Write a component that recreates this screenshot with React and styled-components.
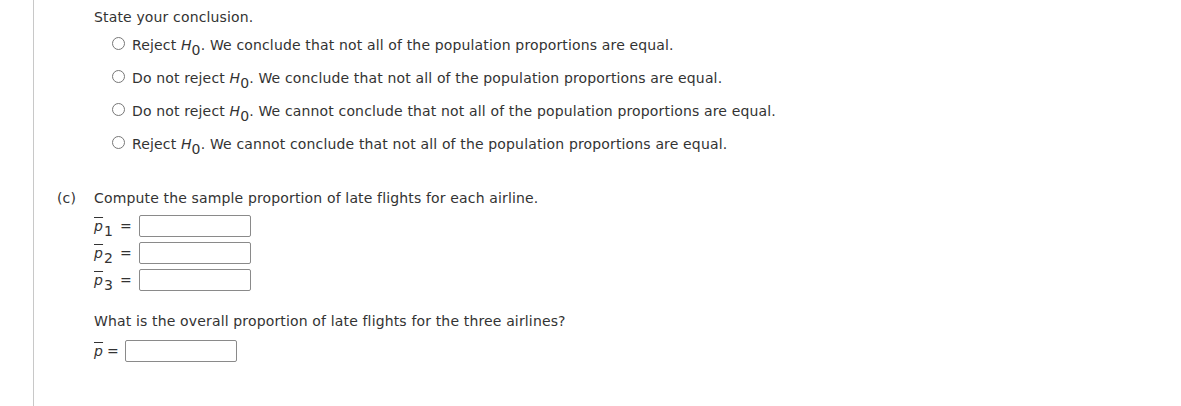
import React from "react";
import styled, { createGlobalStyle } from "styled-components";

const Global = createGlobalStyle`
  body {
    margin: 0;
    background: #fff;
    font-family: "DejaVu Sans", Verdana, sans-serif;
    font-size: 14px;
    letter-spacing: 0.15px;
    color: #333;
  }
`;

const Page = styled.div`
  height: 406px;
  margin-left: 33px;
  border-left: 1px solid #c8c8c8;
  padding-left: 60px;
  box-sizing: border-box;
`;

const Prompt = styled.div`
  padding-top: 9px;
  line-height: 17px;
`;

const Options = styled.div`
  display: flex;
  flex-direction: column;
  gap: 13px;
  margin-top: 9px;
  padding-left: 18px;
`;

const Option = styled.label`
  display: flex;
  align-items: center;
  height: 20px;
  gap: 7px;
`;

const Radio = styled.span`
  width: 11px;
  height: 11px;
  border: 1px solid #777;
  border-radius: 50%;
  flex: none;
  margin-top: -3px;
`;

const Hyp = styled.span`
  font-style: italic;
`;

const Sub = styled.sub`
  font-size: 14px;
  font-style: normal;
  vertical-align: -5px;
  line-height: 0;
`;

const Part = styled.div`
  display: flex;
  margin-top: 36px;
  margin-left: -37px;
`;

const PartLabel = styled.div`
  width: 37px;
`;

const PartBody = styled.div`
  display: flex;
  flex-direction: column;
`;

const Rows = styled.div`
  display: flex;
  flex-direction: column;
  gap: 5px;
  margin-top: ${(p) => p.$top}px;
`;

const Row = styled.div`
  display: flex;
  align-items: center;
  height: 22px;
`;

const Sym = styled.span`
  display: inline-flex;
  align-items: baseline;
  width: ${(p) => p.$w}px;
`;

const Bar = styled.span`
  text-decoration: overline;
  font-style: italic;
`;

const SymSub = styled.span`
  position: relative;
  top: 5px;
  margin-left: 1px;
`;

const Eq = styled.span`
  width: ${(p) => p.$w}px;
`;

const Box = styled.span`
  display: block;
  width: 110px;
  height: 20px;
  border: 1px solid #8a8a8a;
  border-radius: 2px;
  background: #fff;
`;

const Question = styled.div`
  margin-top: 22px;
  line-height: 17px;
`;

const options = [
  ["Reject", "We conclude that not all of the population proportions are equal."],
  ["Do not reject", "We conclude that not all of the population proportions are equal."],
  ["Do not reject", "We cannot conclude that not all of the population proportions are equal."],
  ["Reject", "We cannot conclude that not all of the population proportions are equal."],
];

export default function App() {
  return (
    <>
      <Global />
      <Page>
        <Prompt>State your conclusion.</Prompt>
        <Options>
          {options.map(([a, b], i) => (
            <Option key={i}>
              <Radio />
              <span>
                {a} <Hyp>H</Hyp>
                <Sub>0</Sub>. {b}
              </span>
            </Option>
          ))}
        </Options>
        <Part>
          <PartLabel>(c)</PartLabel>
          <PartBody>
            <div>Compute the sample proportion of late flights for each airline.</div>
            <Rows $top={9}>
              {[1, 2, 3].map((n) => (
                <Row key={n}>
                  <Sym $w={26}>
                    <Bar>p</Bar>
                    <SymSub>{n}</SymSub>
                  </Sym>
                  <Eq $w={19}>=</Eq>
                  <Box />
                </Row>
              ))}
            </Rows>
            <Question>What is the overall proportion of late flights for the three airlines?</Question>
            <Rows $top={10}>
              <Row>
                <Sym $w={13}>
                  <Bar>p</Bar>
                </Sym>
                <Eq $w={18}>=</Eq>
                <Box />
              </Row>
            </Rows>
          </PartBody>
        </Part>
      </Page>
    </>
  );
}
